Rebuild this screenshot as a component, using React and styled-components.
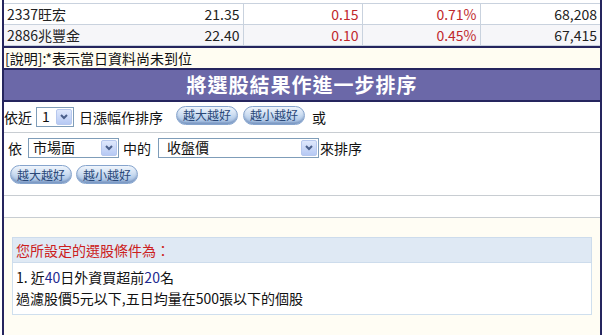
import React from "react";
import styled, { createGlobalStyle } from "styled-components";

const GlobalStyle = createGlobalStyle`
  body {
    margin: 0;
    background: #fff;
    font-family: "Noto Sans CJK TC", "Noto Sans", sans-serif;
    font-size: 14px;
    color: #111;
  }
`;

const navy = "#25255e";
const grid = "#c9d2de";

const Frame = styled.div`
  width: 596px;
  height: 335px;
  margin-left: 2px;
  border-left: 2px solid ${navy};
  border-right: 2px solid ${navy};
  background: #fffdf4;
  overflow: hidden;
`;

const TableWrap = styled.div`
  background: #fff;
  padding-top: 3px;
`;

const Table = styled.table`
  width: 100%;
  border-collapse: collapse;
  table-layout: fixed;
`;

const Row = styled.tr`
  background: ${(p) => (p.$alt ? "#f6f6f9" : "#fff")};
`;

const Cell = styled.td`
  height: 20px;
  padding: 0 3px;
  border-top: 1px solid ${grid};
  border-bottom: 1px solid ${grid};
  border-left: ${(p) => (p.$sep ? `1px solid ${grid}` : "none")};
  text-align: ${(p) => p.$align || "right"};
  color: ${(p) => (p.$red ? "#c0282c" : "#222")};
  font-size: 14px;
  line-height: 20px;
  white-space: nowrap;
`;

const NoteBar = styled.div`
  border-top: 2px solid ${navy};
  height: 20px;
  line-height: 20px;
  padding-left: 1px;
  background: #fffdf2;
`;

const Header = styled.div`
  border-top: 2px solid ${navy};
  border-bottom: 2px solid ${navy};
  height: 30px;
  line-height: 30px;
  background: #6b68a8;
  color: #fff;
  font-size: 20px;
  font-weight: bold;
  letter-spacing: 1px;
  text-align: center;
`;

const Panel = styled.div`
  background: #fff;
`;

const PanelRow = styled.div`
  display: flex;
  flex-direction: ${(p) => (p.$column ? "column" : "row")};
  align-items: ${(p) => (p.$column ? "stretch" : "center")};
  height: ${(p) => p.$h}px;
  border-bottom: 1px solid #c8cdd2;
  padding-left: ${(p) => p.$pl || 0}px;
`;

const Line = styled.div`
  display: flex;
  align-items: center;
  margin-top: ${(p) => p.$mt || 0}px;
  padding-left: ${(p) => p.$pl || 0}px;
`;

const Label = styled.span`
  margin-left: ${(p) => p.$ml || 0}px;
  line-height: 20px;
  white-space: nowrap;
`;

const SelectBox = styled.div`
  width: ${(p) => p.$w}px;
  height: 20px;
  margin-left: ${(p) => p.$ml || 0}px;
  box-sizing: border-box;
  border: 1px solid #7f9db9;
  background: #fff;
  display: flex;
  align-items: center;
  justify-content: space-between;
  padding: 0 1px 0 ${(p) => p.$pad || 4}px;
`;

const SelectText = styled.span`
  line-height: 16px;
  margin-top: -3px;
`;

const SelectArrow = styled.span`
  width: 16px;
  height: 16px;
  box-sizing: border-box;
  border: 1px solid #b7c8ee;
  border-radius: 2px;
  background: linear-gradient(#dfe8fc, #b6c9f4);
  display: flex;
  align-items: center;
  justify-content: center;
`;

const PillButton = styled.button`
  height: 19px;
  margin-left: ${(p) => p.$ml || 0}px;
  margin-bottom: ${(p) => p.$mb || 0}px;
  padding: 0 6px;
  border-radius: 10px;
  border: 1px solid #86a4cd;
  background: linear-gradient(#f0f5fc 0%, #cddef2 45%, #9dbae0 100%);
  box-shadow: inset 0 -2px 2px rgba(60, 90, 140, 0.35);
  color: #2a4878;
  font-family: "Noto Sans CJK TC", sans-serif;
  font-size: 12px;
  line-height: 16px;
  white-space: nowrap;
`;

const CondBox = styled.div`
  margin: 19px 8px 0 8px;
`;

const CondHead = styled.div`
  height: 24px;
  line-height: 24px;
  padding-left: 3px;
  background: #dfe9f4;
  border: 1px solid #cddcec;
  color: #cc2020;
`;

const CondBody = styled.div`
  background: #fff;
  border: 1px solid #cfdfee;
  border-top: none;
  padding: 4px 3px 5px;
`;

const CondLine = styled.div`
  line-height: 21px;
`;

const Num = styled.span`
  color: #1e2a8f;
`;

const Chevron = () => (
  <svg width="10" height="8" viewBox="0 0 10 8">
    <path d="M2 2 L5 5 L8 2" fill="none" stroke="#4a5f8a" strokeWidth="2" />
  </svg>
);

function Select({ w, ml, pad, children }) {
  return (
    <SelectBox $w={w} $ml={ml} $pad={pad}>
      <SelectText>{children}</SelectText>
      <SelectArrow>
        <Chevron />
      </SelectArrow>
    </SelectBox>
  );
}

const rows = [
  { name: "2337旺宏", price: "21.35", chg: "0.15", pct: "0.71%", vol: "68,208" },
  { name: "2886兆豐金", price: "22.40", chg: "0.10", pct: "0.45%", vol: "67,415" },
];

export default function App() {
  return (
    <>
      <GlobalStyle />
      <Frame>
        <TableWrap>
          <Table>
            <colgroup>
              <col style={{ width: 146 }} />
              <col style={{ width: 93 }} />
              <col style={{ width: 119 }} />
              <col style={{ width: 118 }} />
              <col />
            </colgroup>
            <tbody>
              {rows.map((r, i) => (
                <Row key={r.name} $alt={i % 2 === 1}>
                  <Cell $align="left">{r.name}</Cell>
                  <Cell>{r.price}</Cell>
                  <Cell $sep $red>{r.chg}</Cell>
                  <Cell $sep $red>{r.pct}</Cell>
                  <Cell $sep>{r.vol}</Cell>
                </Row>
              ))}
            </tbody>
          </Table>
        </TableWrap>

        <NoteBar>[說明]:*表示當日資料尚未到位</NoteBar>

        <Header>將選股結果作進一步排序</Header>

        <Panel>
          <PanelRow $h={30}>
            <Label>依近</Label>
            <Select w={38} ml={4} pad={5}>1</Select>
            <Label $ml={5}>日漲幅作排序</Label>
            <PillButton $ml={13} $mb={4}>越大越好</PillButton>
            <PillButton $ml={5} $mb={4}>越小越好</PillButton>
            <Label $ml={7}>或</Label>
          </PanelRow>
          <PanelRow $h={62} $column>
            <Line $mt={5} $pl={4}>
              <Label>依</Label>
              <Select w={91} ml={6}>市場面</Select>
              <Label $ml={4}>中的</Label>
              <Select w={161} ml={7} pad={8}>收盤價</Select>
              <Label $ml={1}>來排序</Label>
            </Line>
            <Line $mt={7} $pl={6}>
              <PillButton>越大越好</PillButton>
              <PillButton $ml={4}>越小越好</PillButton>
            </Line>
          </PanelRow>
          <PanelRow $h={21} />
        </Panel>

        <CondBox>
          <CondHead>您所設定的選股條件為：</CondHead>
          <CondBody>
            <CondLine>
              1. 近<Num>40</Num>日外資買超前<Num>20</Num>名
            </CondLine>
            <CondLine>過濾股價5元以下,五日均量在500張以下的個股</CondLine>
          </CondBody>
        </CondBox>
      </Frame>
    </>
  );
}
